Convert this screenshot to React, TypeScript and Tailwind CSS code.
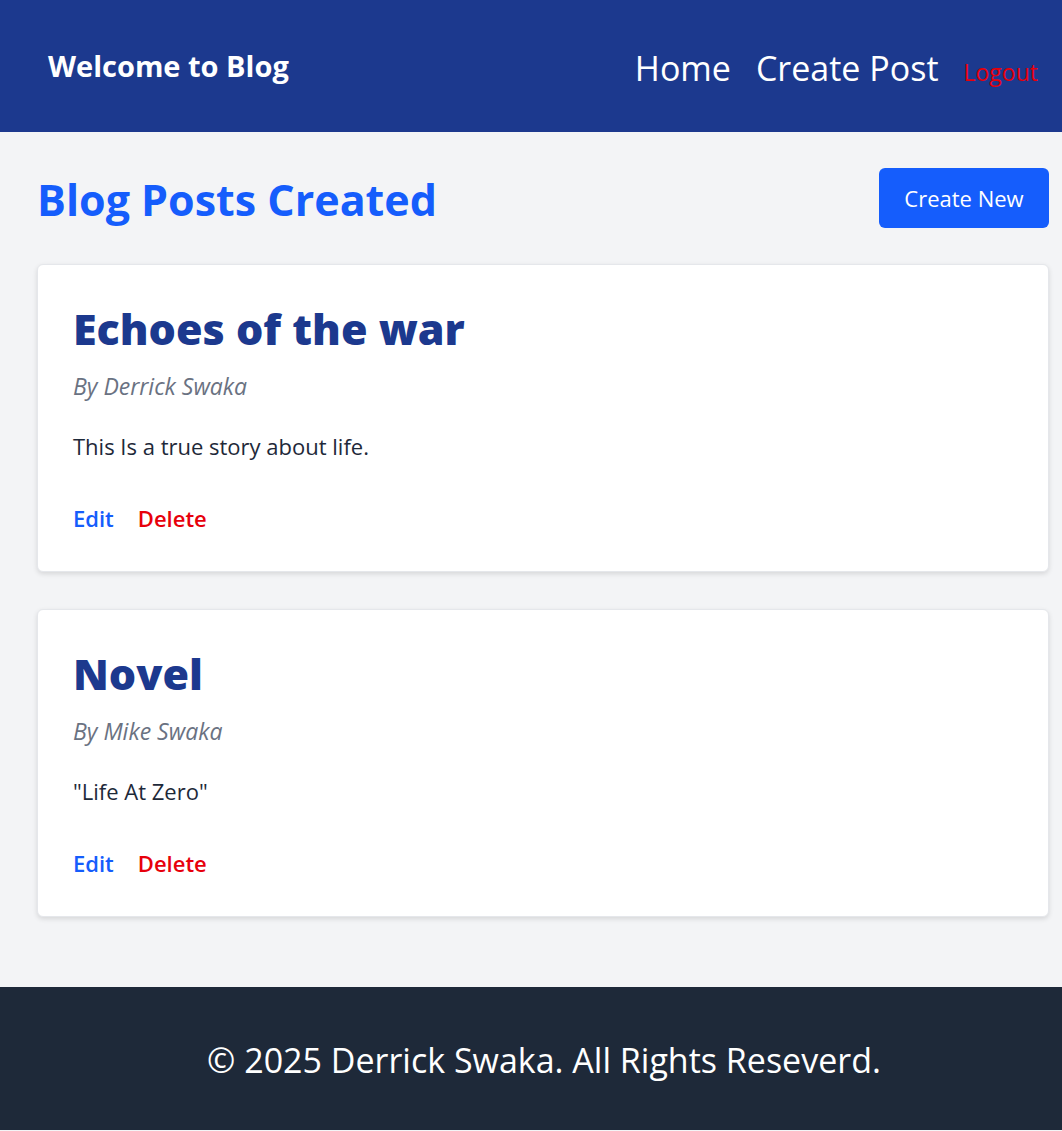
import React from "react";

const posts = [
  { title: "Echoes of the war", author: "Derrick Swaka", body: "This Is a true story about life." },
  { title: "Novel", author: "Mike Swaka", body: "\"Life At Zero\"" },
];

const PostCard = ({ title, author, body }: { title: string; author: string; body: string }) => (
  <div className="bg-white rounded-[6px] border border-gray-200 shadow-[0_2px_5px_rgba(0,0,0,0.12)] px-[35px] pt-[36px] pb-[37px]">
    <h2 className="text-[43px] leading-[56px] font-extrabold text-[#1c398e]">{title}</h2>
    <p className="mt-[13px] text-[23px] leading-[32px] italic text-[#6a7282]">By {author}</p>
    <p className="mt-[28px] text-[22px] leading-[32px] text-[#1e2939]">{body}</p>
    <div className="mt-[40px] flex gap-[24px] text-[22px] leading-[32px] font-semibold">
      <button className="text-[#155dfc]">Edit</button>
      <button className="text-[#e7000b]">Delete</button>
    </div>
  </div>
);

export default function App() {
  return (
    <div className="min-h-screen bg-[#f3f4f6] font-['Open_Sans',sans-serif] flex flex-col">
      <header className="bg-[#1c398e] h-[132px] flex items-center justify-between pl-[48px] pr-[24px]">
        <h1 className="text-[29px] font-bold text-white">Welcome to Blog</h1>
        <nav className="flex items-baseline gap-[25px] pt-[4px]">
          <a className="text-[34px] text-white">Home</a>
          <a className="text-[34px] text-white">Create Post</a>
          <button className="text-[23px] text-[#e7000b]">Logout</button>
        </nav>
      </header>
      <main className="pl-[37px] pr-[13px] pt-[36px] pb-[70px]">
        <div className="flex items-start justify-between h-[60px]">
          <h1 className="text-[43px] leading-[56px] font-bold text-[#155dfc] mt-[4px]">Blog Posts Created</h1>
          <button className="bg-[#155dfc] text-white text-[22px] rounded-[6px] w-[170px] h-[60px]">Create New</button>
        </div>
        <div className="mt-[36px] flex flex-col gap-[37px]">
          {posts.map((p) => (
            <PostCard key={p.title} {...p} />
          ))}
        </div>
      </main>
      <footer className="bg-[#1e2939] h-[143px] flex items-center justify-center pl-[26px] pt-[4px]">
        <p className="text-[34px] text-white">© 2025 Derrick Swaka. All Rights Reseverd.</p>
      </footer>
    </div>
  );
}
